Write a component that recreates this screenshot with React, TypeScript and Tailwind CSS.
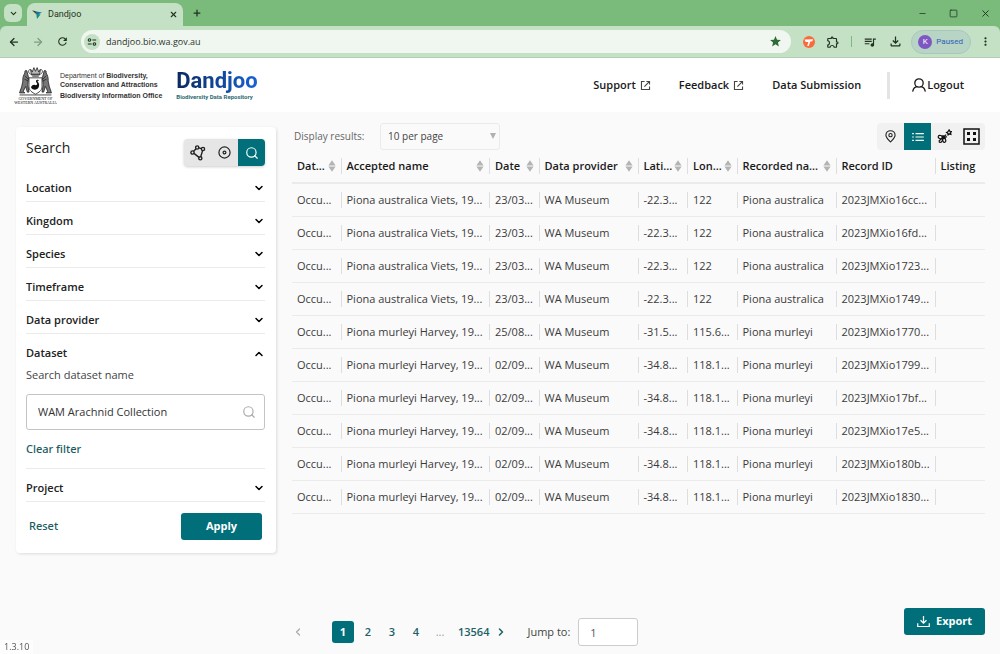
import { useState } from 'react'
import {
  ArrowLeft,
  ArrowRight,
  ChevronDown,
  ChevronLeft,
  ChevronRight,
  ChevronUp,
  Minus,
  Plus,
  Search,
  Square,
  X,
} from 'lucide-react'
import {
  MdMoreVert,
  MdOutlineExtension,
  MdOutlineFileDownload,
  MdQueueMusic,
  MdRefresh,
  MdStar,
} from 'react-icons/md'

type Column = { label: string; sortable: boolean; width: string }

const columns: Column[] = [
  { label: 'Dat...', sortable: true, width: 'w-1/14' },
  { label: 'Accepted name', sortable: true, width: 'w-3/14' },
  { label: 'Date', sortable: true, width: 'w-1/14' },
  { label: 'Data provider', sortable: true, width: 'w-2/14' },
  { label: 'Lati...', sortable: true, width: 'w-1/14' },
  { label: 'Lon...', sortable: true, width: 'w-1/14' },
  { label: 'Recorded na...', sortable: true, width: 'w-2/14' },
  { label: 'Record ID', sortable: false, width: 'w-2/14' },
  { label: 'Listing', sortable: false, width: 'w-1/14' },
]

const rows = [
  ['Occu...', 'Piona australica Viets, 19...', '23/03...', 'WA Museum', '-22.3...', '122', 'Piona australica', '2023JMXio16cc...', ''],
  ['Occu...', 'Piona australica Viets, 19...', '23/03...', 'WA Museum', '-22.3...', '122', 'Piona australica', '2023JMXio16fd...', ''],
  ['Occu...', 'Piona australica Viets, 19...', '23/03...', 'WA Museum', '-22.3...', '122', 'Piona australica', '2023JMXio1723...', ''],
  ['Occu...', 'Piona australica Viets, 19...', '23/03...', 'WA Museum', '-22.3...', '122', 'Piona australica', '2023JMXio1749...', ''],
  ['Occu...', 'Piona murleyi Harvey, 19...', '25/08...', 'WA Museum', '-31.5...', '115.6...', 'Piona murleyi', '2023JMXio1770...', ''],
  ['Occu...', 'Piona murleyi Harvey, 19...', '02/09...', 'WA Museum', '-34.8...', '118.1...', 'Piona murleyi', '2023JMXio1799...', ''],
  ['Occu...', 'Piona murleyi Harvey, 19...', '02/09...', 'WA Museum', '-34.8...', '118.1...', 'Piona murleyi', '2023JMXio17bf...', ''],
  ['Occu...', 'Piona murleyi Harvey, 19...', '02/09...', 'WA Museum', '-34.8...', '118.1...', 'Piona murleyi', '2023JMXio17e5...', ''],
  ['Occu...', 'Piona murleyi Harvey, 19...', '02/09...', 'WA Museum', '-34.8...', '118.1...', 'Piona murleyi', '2023JMXio180b...', ''],
  ['Occu...', 'Piona murleyi Harvey, 19...', '02/09...', 'WA Museum', '-34.8...', '118.1...', 'Piona murleyi', '2023JMXio1830...', ''],
]

const filters = ['Location', 'Kingdom', 'Species', 'Timeframe', 'Data provider']

function Favicon() {
  return (
    <svg viewBox="0 0 20 18" className="h-[9px] w-[10px]">
      <path d="M0 1l9 2 2 6-3 1z" fill="#f2b632" />
      <path d="M3 2l17 3-8 4-4-1z" fill="#1d6fa5" />
      <path d="M9 7l8 2-7 9-1-6z" fill="#0f8f8c" />
      <path d="M0 1l6 1 3 5z" fill="#173a63" />
    </svg>
  )
}

function SiteSettingsIcon() {
  return (
    <svg viewBox="0 0 12 12" className="size-[10px]" fill="none" stroke="#1f3320" strokeWidth="1.3">
      <circle cx="3" cy="3.6" r="1.5" />
      <path d="M6.4 3.6H11M1 8.4h4.6" />
      <circle cx="9" cy="8.4" r="1.5" />
    </svg>
  )
}

function TagIcon() {
  return (
    <svg viewBox="0 0 12 12" className="size-3">
      <circle cx="6" cy="6" r="6" fill="#fb6a3a" />
      <path d="M1.500 3.600l8.800-.4-1 2.100-2 .3-1.600 4.300H4.200l1.200-3.900-2.700.1z" fill="#fff" />
    </svg>
  )
}

function CrestIcon() {
  return (
    <svg viewBox="0 0 80 76" className="h-[31px] w-[33px]" fill="none" stroke="#222" strokeWidth="2">
      {/* crown and mantling */}
      <path d="M28 8l4 7 4-11 4 9 4-9 4 11 4-7-2 14H30z" fill="#bbb" />
      <path d="M26 8c-5 4-3 10 2 12M54 8c5 4 3 10-2 12M30 20h20M32 25h16" />
      {/* shield with swan */}
      <path d="M24 29h32v22c0 9-8 14-16 18-8-4-16-9-16-18z" fill="#fff" />
      <path d="M29 52c3-7 8-7 12-5 4-1 4-4 1-7-2-3 0-7 4-6l3 3-4-1c-1 2 4 5 4 10 0 8-5 12-10 12-5 0-9-2-10-6z" fill="#111" stroke="none" />
      {/* kangaroos */}
      <path d="M19 12c-4-3-6 1-5 5-3 5-6 11-5 20l-3 14c-2 6-4 10-5 15h13l-4-4 6-12 4 14h4l-3-18 2-18-3-11z" fill="#777" />
      <path d="M61 12c4-3 6 1 5 5 3 5 6 11 5 20l3 14c2 6 4 10 5 15H66l4-4-6-12-4 14h-4l3-18-2-18 3-11z" fill="#777" />
      <path d="M14 24l9 9M13 32l9 5M66 24l-9 9M67 32l-9 5M1 71h78" />
    </svg>
  )
}

function ExternalIcon() {
  return (
    <svg viewBox="0 0 12 12" className="size-[11px]" fill="none" stroke="#444" strokeWidth="1.2">
      <path d="M5 1.600H1.600v8.800h8.800V7M7 1.600h3.400V5M10.400 1.600L4.800 7.200" />
    </svg>
  )
}

function UserIcon() {
  return (
    <svg viewBox="0 0 14 14" className="size-[14px]" fill="none" stroke="#1a1a1a" strokeWidth="1.3">
      <circle cx="7" cy="5" r="4.200" />
      <path d="M.8 13.200C1.300 10.700 3 9 5 8.700M13.200 13.200C12.700 10.700 11 9 9 8.700" strokeLinecap="round" />
    </svg>
  )
}

function PolygonIcon() {
  return (
    <svg viewBox="0 0 16 16" className="size-4" fill="none" stroke="#222" strokeWidth="1.4">
      <circle cx="2.500" cy="7.500" r="1.600" />
      <circle cx="7.200" cy="2.500" r="1.600" />
      <circle cx="13" cy="4" r="1.600" />
      <circle cx="10.300" cy="13.300" r="1.600" />
      <path d="M3.600 6.300l2.500-2.600M8.800 2.900l2.600.7M12.600 5.600l-1.900 6.100M4 8.400l5 4" />
    </svg>
  )
}

function RadiusIcon() {
  return (
    <svg viewBox="0 0 14 14" className="size-[13px]" fill="none" stroke="#222" strokeWidth="1.3">
      <circle cx="7" cy="7" r="6" />
      <circle cx="7" cy="7" r="1.500" />
    </svg>
  )
}

function PinIcon() {
  return (
    <svg viewBox="0 0 12 14" className="h-[13px] w-[11px]" fill="none" stroke="#222" strokeWidth="1.200">
      <path d="M6 13C3.500 10.300 1 8 1 5.500a5 4.800 0 0 1 10 0C11 8 8.500 10.300 6 13z" />
      <circle cx="6" cy="5.500" r="1.800" />
    </svg>
  )
}

function ListIcon() {
  return (
    <svg viewBox="0 0 14 12" className="h-[10px] w-3" fill="none" stroke="#fff" strokeWidth="1.400">
      <path d="M0 2h2M4 2h10M0 6h2M4 6h10M0 10h2M4 10h10" />
    </svg>
  )
}

function SpeciesIcon() {
  return (
    <svg viewBox="0 0 16 16" className="size-[15px]" fill="none" stroke="#111" strokeWidth="1.200">
      {/* bee, heading for the flower */}
      <ellipse cx="3.500" cy="8.600" rx="2.300" ry="1.700" transform="rotate(20 3.500 8.600)" />
      <ellipse cx="7.600" cy="12" rx="1.700" ry="2.200" transform="rotate(-20 7.600 12)" />
      <path d="M5.300 9.900L2.300 12.600l.2 1.600 1.700.1 2.400-3" />
      <path d="M6 7.300l2.200.2.600 2.300-1.700.7-1.600-1.600z" fill="#111" />
      <path d="M8.200 7.500l1.600-1.500M8.800 8.700l1.900-.5" />
      {/* flower */}
      <path d="M12.900.9l.9 1.500 1.600.2-.9 1.500.4 1.700-1.700-.4-1.400 1-.3-1.700-1.400-1 1.500-.8z" fill="#111" />
      <circle cx="12.800" cy="3.600" r=".9" fill="#fff" stroke="none" />
    </svg>
  )
}

function GridIcon() {
  return (
    <svg viewBox="0 0 17 17" className="size-[17px]">
      <rect x="1" y="1" width="15" height="15" fill="none" stroke="#111" strokeWidth="1.500" />
      <path d="M4 4h3v3H4zM10 4h3v3h-3zM4 10h3v3H4zM10 10h3v3h-3z" fill="#111" />
    </svg>
  )
}

function SortIcon() {
  return (
    <svg viewBox="0 0 8 12" className="h-3 w-2 shrink-0" fill="#b4b4b4">
      <path d="M4 .3L7.600 5.500H.4zM4 11.700L.4 6.500h7.200z" />
    </svg>
  )
}

function ExportIcon() {
  return (
    <svg viewBox="0 0 14 14" className="size-[13px]" fill="none" stroke="#fff" strokeWidth="1.300">
      <path d="M7 1v7.500M3.800 5.700L7 8.900l3.200-3.200M.8 8.800v3.600h12.400V8.800" />
    </svg>
  )
}

function BrowserChrome() {
  return (
    <div className="bg-[#7abb7c]">
      <div className="flex h-[26px] items-center justify-between pl-1">
        <div className="flex h-full items-center">
          <button aria-label="Search tabs" className="flex size-[18px] items-center justify-center rounded-md bg-[#c5e1c5]">
            <ChevronDown className="size-[9px] text-[#1f3320]" strokeWidth={3} />
          </button>
          <div className="ml-[5px] flex h-full w-[156px] items-end pt-[3px]">
            <div className="flex h-full w-full items-center rounded-t-lg bg-[#c5e1c5] px-[5px]">
              <Favicon />
              <span className="ml-[6px] font-['Roboto',sans-serif] text-[9px] text-[#1f3320]">Dandjoo</span>
              <button aria-label="Close tab" className="ml-auto">
                <X className="size-[9px] text-[#1f3320]" strokeWidth={3} />
              </button>
            </div>
          </div>
          <button aria-label="New tab" className="ml-[9px]">
            <Plus className="size-[10px] text-[#1f3320]" strokeWidth={3} />
          </button>
        </div>
        <div className="flex items-center gap-[22px] pr-[9px] text-[#1f3320]">
          <button aria-label="Minimise"><Minus className="size-[9px]" /></button>
          <button aria-label="Maximise"><Square className="size-[9px]" /></button>
          <button aria-label="Close window"><X className="size-[11px]" /></button>
        </div>
      </div>

      <div className="flex h-8 items-center rounded-t-md border-b border-[#b3cfb3] bg-[#c5e1c5] pl-2 text-[#1f3320]">
        <button aria-label="Back"><ArrowLeft className="size-3" strokeWidth={2.500} /></button>
        <button aria-label="Forward" className="ml-3 opacity-40"><ArrowRight className="size-3" strokeWidth={2.500} /></button>
        <button aria-label="Reload" className="ml-3"><MdRefresh className="size-[13px]" /></button>
        <div className="ml-3 flex h-[23px] flex-1 items-center rounded-full bg-[#f0f7f0] pr-[9px] pl-[3px]">
          <button aria-label="Site information" className="flex size-4 items-center justify-center rounded-full bg-[#c5e1c5]">
            <SiteSettingsIcon />
          </button>
          <input
            aria-label="Address"
            defaultValue="dandjoo.bio.wa.gov.au"
            className="ml-[6px] min-w-0 flex-1 bg-transparent text-[9px] text-[#2b352b] outline-none"
          />
          <MdStar className="size-[13px] text-[#2f6b35]" />
        </div>
        <div className="ml-3 flex items-center gap-[11px]">
          <TagIcon />
          <MdOutlineExtension className="size-[14px]" />
          <span className="h-[11px] w-px bg-[#7abb7c]" />
          <MdQueueMusic className="size-[14px]" />
          <MdOutlineFileDownload className="size-[15px]" />
        </div>
        <button className="ml-2 flex h-6 items-center gap-1 rounded-full border border-[#a9c8bd] bg-[#b7d4c5] pr-[7px] pl-[6px] font-['Roboto',sans-serif] text-[8px] text-[#2d61b5]">
          <span className="flex size-[14px] items-center justify-center rounded-full bg-[#7e57c2] text-[8px] text-white">K</span>
          Paused
        </button>
        <button aria-label="Menu" className="mr-2 ml-2"><MdMoreVert className="size-[13px]" /></button>
      </div>
    </div>
  )
}

function SiteHeader() {
  return (
    <header className="flex h-[54px] items-center justify-between bg-white pr-9 pl-4">
      <div className="flex items-center">
        <div className="flex w-[39px] flex-col items-center">
          <CrestIcon />
          <p className="text-center font-['Liberation_Serif',serif] text-[4px] leading-[4px] whitespace-nowrap text-black">
            GOVERNMENT OF
            <br />
            WESTERN AUSTRALIA
          </p>
        </div>
        <div className="ml-[5px] font-['Liberation_Sans',sans-serif] text-[7px] leading-[9px] font-bold whitespace-nowrap text-[#333]">
          <p><span className="font-normal">Department of</span> Biodiversity,</p>
          <p>Conservation and Attractions</p>
          <p className="mt-[2px]">Biodiversity Information Office</p>
        </div>
        <div className="ml-[14px] font-['Roboto',sans-serif] whitespace-nowrap">
          <p className="bg-linear-to-r from-[#0b2a5c] to-[#1763d6] bg-clip-text text-[22px] leading-6 font-bold text-transparent">
            Dandjoo
          </p>
          <p className="text-[6px] leading-2 font-bold text-[#2e6b72]">Biodiversity Data Repository</p>
        </div>
      </div>
      <nav className="flex items-center text-[11px] font-semibold text-[#1a1a1a]">
        <a href="#support" className="flex items-center gap-1">
          Support <ExternalIcon />
        </a>
        <a href="#feedback" className="ml-7 flex items-center gap-1">
          Feedback <ExternalIcon />
        </a>
        <a href="#data" className="ml-7">Data Submission</a>
        <span className="ml-[26px] h-[27px] w-[3px] bg-[#e4e4e4]" />
        <a href="#logout" className="ml-[22px] flex items-center gap-px">
          <UserIcon /> Logout
        </a>
      </nav>
    </header>
  )
}

function FilterRow({ label }: { label: string }) {
  return (
    <button className="flex h-[33px] w-full items-center justify-between border-b border-[#ebebeb] pt-[6px] font-semibold text-[#222]">
      {label}
      <ChevronDown className="size-3 text-black" strokeWidth={3} />
    </button>
  )
}

function SearchPanel() {
  const [dataset, setDataset] = useState('WAM Arachnid Collection')

  return (
    <aside className="w-[260px] shrink-0 self-start rounded bg-white pt-3 pr-[11px] pb-[13px] pl-[10px] text-[11px] shadow-[1px_1px_3px_rgba(0,0,0,0.12)]">
      <div className="flex h-[30px] items-start justify-between">
        <h2 className="text-[14px] leading-[18px] text-[#222]">Search</h2>
        <div className="flex h-[27px] overflow-hidden rounded bg-[#e6e6e6] shadow-[0_1px_3px_rgba(0,0,0,0.2)]">
          <button aria-label="Draw polygon" className="flex w-[27px] items-center justify-center"><PolygonIcon /></button>
          <button aria-label="Draw radius" className="flex w-[27px] items-center justify-center"><RadiusIcon /></button>
          <button aria-label="Search" className="flex w-[27px] items-center justify-center bg-[#006f7a]">
            <Search className="size-[14px] text-white" />
          </button>
        </div>
      </div>

      {filters.map((label) => (
        <FilterRow key={label} label={label} />
      ))}

      <div className="border-b border-[#ebebeb] pb-[11px]">
        <button className="flex h-[33px] w-full items-center justify-between pt-[6px] font-semibold text-[#222]">
          Dataset
          <ChevronUp className="size-3 text-black" strokeWidth={3} />
        </button>
        <label htmlFor="dataset" className="block leading-4 text-[#444]">Search dataset name</label>
        <div className="mt-[11px] flex h-9 items-center rounded-[3px] border border-[#c4c4c4] pr-2 pl-[11px]">
          <input
            id="dataset"
            value={dataset}
            onChange={(e) => setDataset(e.target.value)}
            className="min-w-0 flex-1 bg-transparent text-[#333] outline-none"
          />
          <Search className="size-[14px] text-[#aaa]" />
        </div>
        <button
          className="mt-[11px] block font-['Noto_Sans',sans-serif] leading-4 font-medium text-[#1a5c62]"
          onClick={() => setDataset('')}
        >
          Clear filter
        </button>
      </div>

      <FilterRow label="Project" />

      <div className="mt-[11px] flex items-center justify-between px-[3px]">
        <button className="font-['Noto_Sans',sans-serif] font-medium text-[#1a5c62]">Reset</button>
        <button className="h-[27px] w-[81px] rounded-[3px] bg-[#006f7a] font-bold text-white">Apply</button>
      </div>
    </aside>
  )
}

function ResultsToolbar() {
  return (
    <div className="flex items-center justify-between">
      <div className="flex items-center pl-[2px] text-[10px]">
        <label htmlFor="per-page" className="w-[86px] font-medium text-[#666]">Display results:</label>
        <div className="relative">
          <select
            id="per-page"
            className="h-[27px] w-[120px] appearance-none rounded-[3px] border border-[#ebebeb] bg-[#fafafa] pl-[7px] text-[#444]"
          >
            <option>10 per page</option>
            <option>20 per page</option>
            <option>50 per page</option>
          </select>
          <svg viewBox="0 0 6 6" className="pointer-events-none absolute top-[10px] right-1 size-[6px]" fill="#b0b0b0">
            <path d="M0 0h6L3 6z" />
          </svg>
        </div>
      </div>
      <div className="flex h-[27px] overflow-hidden rounded bg-[#f1f1f1]">
        <button aria-label="Map view" className="flex w-[27px] items-center justify-center"><PinIcon /></button>
        <button aria-label="List view" className="flex w-[27px] items-center justify-center bg-[#006f7a]"><ListIcon /></button>
        <button aria-label="Species view" className="flex w-[27px] items-center justify-center"><SpeciesIcon /></button>
        <button aria-label="Grid view" className="flex w-[27px] items-center justify-center"><GridIcon /></button>
      </div>
    </div>
  )
}

function ResultsTable() {
  return (
    <table className="w-full table-fixed border-separate border-spacing-0 text-left text-[11px]">
      <thead>
        <tr className="h-[34px]">
          {columns.map((col, i) => (
            <th key={col.label} className={`${col.width} border-b-2 border-[#ebebeb] p-0 font-semibold text-[#1a1a1a]`}>
              <div className={`flex h-4 items-center justify-between overflow-hidden pr-[5px] pl-[5px] leading-4 whitespace-nowrap ${i < columns.length - 1 ? 'border-r border-[#dedede]' : ''}`}>
                {col.label}
                {col.sortable && <SortIcon />}
              </div>
            </th>
          ))}
        </tr>
      </thead>
      <tbody>
        {rows.map((row) => (
          <tr key={row[7]} className="h-[33px]">
            {row.map((cell, i) => (
              <td key={i} className="border-b border-[#ebebeb] p-0 text-[#3a3a3a]">
                <div className={`h-4 overflow-hidden pl-[5px] leading-4 whitespace-nowrap ${i < row.length - 1 ? 'border-r border-[#dedede]' : ''}`}>
                  {cell}
                </div>
              </td>
            ))}
          </tr>
        ))}
      </tbody>
    </table>
  )
}

function Pagination() {
  return (
    <nav className="flex items-center text-[11px] font-semibold text-[#1a6268]">
      <button aria-label="Previous page" className="text-[#aaa]">
        <ChevronLeft className="size-3" strokeWidth={2.500} />
      </button>
      <button className="ml-7 size-[22px] rounded-[3px] bg-[#006f7a] font-bold text-white">1</button>
      <button className="ml-[2px] w-6">2</button>
      <button className="w-6">3</button>
      <button className="w-6">4</button>
      <span className="w-6 text-center font-normal text-[#999]">...</span>
      <button className="ml-[6px]">13564</button>
      <button aria-label="Next page" className="ml-[6px]">
        <ChevronRight className="size-3" strokeWidth={3} />
      </button>
      <label htmlFor="jump" className="ml-5 font-normal text-[#444]">Jump to:</label>
      <input
        id="jump"
        defaultValue="1"
        className="ml-2 h-7 w-[60px] rounded-[3px] border border-[#ccc] bg-white pl-[11px] font-normal text-[#555] outline-none"
      />
    </nav>
  )
}

export default function App() {
  return (
    <div className="flex min-h-screen flex-col bg-[#fafafa] font-['Open_Sans','Noto_Sans',sans-serif]">
      <BrowserChrome />
      <SiteHeader />
      <main className="flex flex-1 gap-4 pt-[11px] pr-[15px] pb-2 pl-4">
        <div className="pt-1">
          <SearchPanel />
        </div>
        <section className="flex min-w-0 flex-1 flex-col">
          <ResultsToolbar />
          <ResultsTable />
          <div className="mt-auto flex items-end justify-between">
            <Pagination />
            <button className="mb-[11px] flex h-[27px] w-[81px] items-center justify-center gap-[6px] rounded-[3px] bg-[#006f7a] text-[11px] font-bold text-white">
              <ExportIcon /> Export
            </button>
          </div>
        </section>
      </main>
      <div className="fixed bottom-0 left-0 bg-white/60 px-1 text-[9px] leading-[14px] text-[#555]">1.3.10</div>
    </div>
  )
}
